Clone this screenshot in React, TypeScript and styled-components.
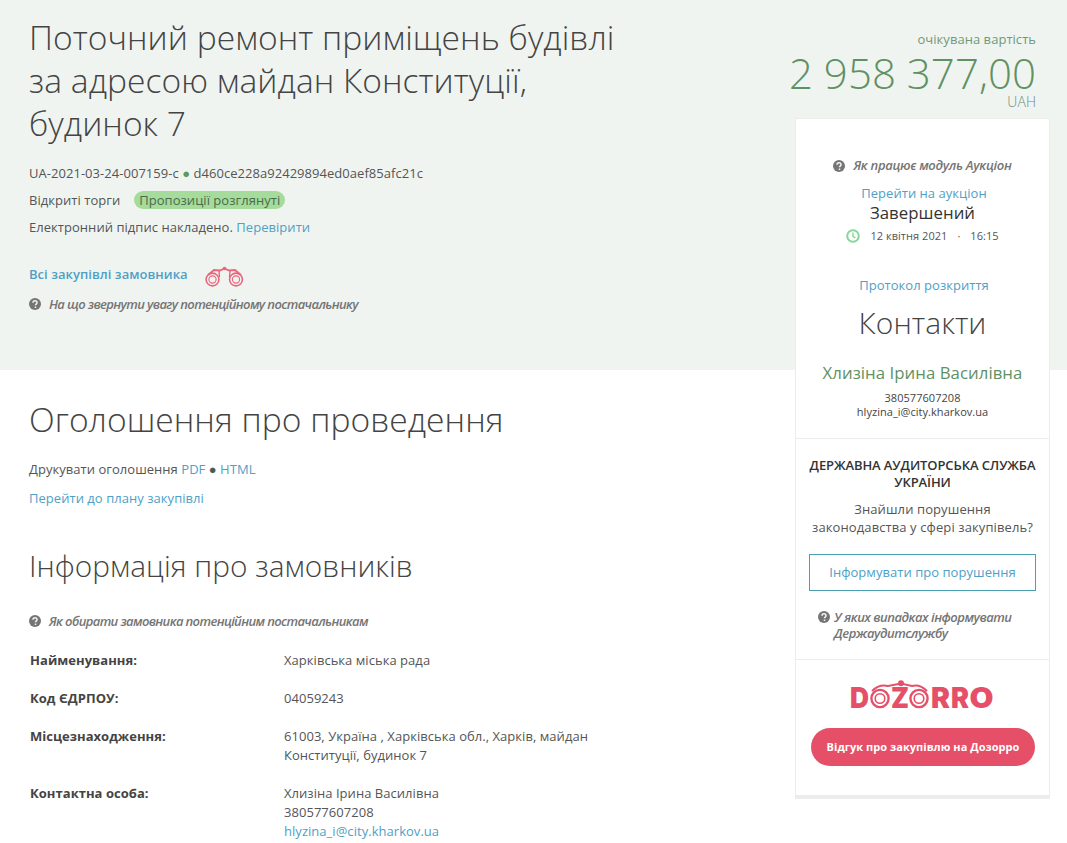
import React from "react";
import styled, { createGlobalStyle } from "styled-components";

const GlobalStyle = createGlobalStyle`
  html, body {
    margin: 0;
    padding: 0;
    height: 843px;
    overflow: hidden;
    background: #fff;
  }
  body {
    font-family: "Open Sans", "Liberation Sans", sans-serif;
    font-size: 13px;
    letter-spacing: 0.04px;
    color: #444;
  }
  * { box-sizing: border-box; }
`;

const Page = styled.div`
  display: grid;
  grid-template-columns: 795px 255px;
  height: 843px;
  background: linear-gradient(#f0f4f1 370px, #fff 370px);
`;

const Main = styled.main`
  padding: 16px 0 0 29px;
`;

const Hero = styled.section`
  height: 354px;
`;

const Title = styled.h1`
  margin: 0 0 19px;
  width: 600px;
  font-size: 33.6px;
  line-height: 43px;
  font-weight: 300;
  color: #444;
`;

const Line = styled.div<{ $gap?: number }>`
  line-height: 18px;
  font-size: 13px;
  color: #555;
  margin-bottom: ${(p) => p.$gap ?? 9}px;
  display: flex;
  align-items: center;
  white-space: pre;
`;

const Dot = styled.span`
  color: #5a9a62;
`;

const Link = styled.a`
  color: #4f9fc6;
  text-decoration: none;
`;

const Badge = styled.span`
  margin-left: 14px;
  padding: 0 5px;
  height: 18px;
  border-radius: 9px;
  background: #a5dc9b;
  color: #4b6a4c;
  line-height: 18px;
`;

const BuyerLink = styled(Link)`
  font-weight: 600;
  margin-right: 17px;
`;

const BuyerIcon = styled.span`
  display: flex;
  margin-top: 5px;
`;

const Hint = styled.div`
  display: flex;
  align-items: flex-start;
  gap: 8px;
  font-size: 13px;
  line-height: 16px;
  font-style: italic;
  font-weight: 600;
  color: #757575;
  letter-spacing: -0.62px;
`;

const BuyerRow = styled(Line)`
  margin: 26px 0 10px;
  height: 24px;
`;

const SectionTitle = styled.h2<{ $bottom: number }>`
  margin: 0 0 ${(p) => p.$bottom}px;
  font-size: 33.6px;
  line-height: 44px;
  font-weight: 300;
  color: #444;
`;

const SubTitle = styled(SectionTitle)`
  font-size: 29.8px;
  line-height: 38px;
`;

const Notice = styled.section`
  padding-top: 27px;
`;

const Spaced = styled(Line)`
  margin: 0 0 11px;
`;

const InfoGrid = styled.dl`
  display: grid;
  grid-template-columns: 254px 320px;
  row-gap: 19px;
  margin: 22px 0 0 1px;
`;

const Term = styled.dt`
  font-weight: 700;
  color: #444;
  line-height: 19px;
`;

const Value = styled.dd`
  margin: 0;
  color: #555;
  line-height: 19px;
`;

const Aside = styled.aside`
  display: flex;
  flex-direction: column;
  height: 799px;
`;

const Price = styled.div`
  height: 119px;
  padding: 30px 14px 0 0;
  text-align: right;
`;

const PriceLabel = styled.div`
  font-size: 13px;
  line-height: 18px;
  color: #6f9a78;
`;

const PriceValue = styled.div`
  font-size: 42px;
  line-height: 50px;
  font-weight: 300;
  color: #5f9163;
  margin-left: -60px;
  white-space: nowrap;
`;

const Currency = styled.div`
  font-size: 14px;
  line-height: 14px;
  font-weight: 300;
  color: #6f8a78;
  margin-top: -3px;
`;

const Card = styled.div`
  flex: 1;
  background: #fff;
  border: 1px solid #ececec;
  border-bottom: 4px solid #ececec;
  text-align: center;
`;

const CardSection = styled.div<{ $height: number; $top: number }>`
  height: ${(p) => p.$height}px;
  padding-top: ${(p) => p.$top}px;
  border-bottom: 1px solid #ececec;
  &:last-child { border-bottom: 0; }
`;

const CenteredHint = styled(Hint)`
  justify-content: center;
  align-items: center;
  letter-spacing: -0.3px;
`;

const CardLink = styled(Link)<{ $top: number }>`
  display: block;
  line-height: 18px;
  padding-left: 3px;
  margin-top: ${(p) => p.$top}px;
`;

const Status = styled.div`
  font-size: 16.8px;
  line-height: 22px;
  color: #333;
`;

const DateRow = styled.div`
  display: flex;
  justify-content: center;
  align-items: center;
  font-size: 11px;
  line-height: 24px;
  color: #555;
  gap: 10px;
`;

const ContactsTitle = styled.div`
  font-size: 30px;
  line-height: 40px;
  font-weight: 300;
  color: #444;
  margin: 9px 0 18px;
`;

const ContactName = styled.div`
  font-size: 16.8px;
  line-height: 24px;
  color: #5f9163;
  margin-bottom: 6px;
`;

const Small = styled.div`
  font-size: 11px;
  line-height: 14px;
  color: #444;
`;

const AuditTitle = styled.div`
  font-size: 13px;
  line-height: 17px;
  font-weight: 600;
  color: #333;
  letter-spacing: -0.1px;
  margin-bottom: 9px;
`;

const AuditText = styled.div`
  font-size: 13px;
  line-height: 18px;
  color: #555;
  letter-spacing: 0.1px;
  margin-bottom: 18px;
`;

const OutlineButton = styled.a`
  display: block;
  margin: 0 13px;
  height: 37px;
  line-height: 35px;
  border: 1px solid #4a9fb0;
  color: #4f9fc6;
  font-size: 13px;
`;

const AuditHint = styled(Hint)`
  margin: 18px 0 0 22px;
  text-align: left;
  gap: 4px;
  letter-spacing: -0.48px;
`;

const ReviewButton = styled.a`
  display: block;
  margin: 0 14px 0 15px;
  height: 38px;
  line-height: 38px;
  border-radius: 19px;
  background: #e55068;
  color: #fff;
  font-size: 11px;
  font-weight: 700;
`;

const LogoWrap = styled.div`
  display: flex;
  justify-content: center;
  margin-bottom: 16px;
`;

const LogoLetters = styled.text`
  font-family: "Inter", "Liberation Sans", sans-serif;
  font-weight: 900;
  font-size: 28px;
  letter-spacing: 0;
  fill: #e55068;
`;

const HelpIcon = () => (
  <svg width="12" height="12" viewBox="0 0 24 24" style={{ flex: "none", marginTop: 2 }}>
    <circle cx="12" cy="12" r="12" fill="#757575" />
    <path
      d="M8 9.5a4 4 0 0 1 8 0c0 2.6-3 2.7-3 5M13 17v3"
      fill="none"
      stroke="#f0f4f1"
      strokeWidth="3"
    />
  </svg>
);

const ClockIcon = () => (
  <svg width="14" height="14" viewBox="0 0 14 14" fill="none" stroke="#86d69a" strokeWidth="2">
    <circle cx="7" cy="7" r="5.8" />
    <path d="M7 3.6V7.4L9.4 8.8" strokeWidth="1.4" />
  </svg>
);

const Binoculars = () => (
  <svg width="40" height="22" viewBox="0 0 40 22" fill="none" stroke="#e8667c">
    <path d="M3 9 9 4 15 4.5 19.5 2.5 24 4.5 30 4 36 9" strokeWidth="1.8" />
    <path d="M14 5 14.5 11M25 5 24.5 11" strokeWidth="1.4" />
    <circle cx="19.5" cy="2.5" r="1.8" fill="#e8667c" stroke="none" />
    <circle cx="7.5" cy="13.5" r="6.4" strokeWidth="1.6" />
    <circle cx="7.5" cy="13.5" r="3.6" strokeWidth="1.1" />
    <circle cx="31" cy="13.5" r="6.4" strokeWidth="1.6" />
    <circle cx="31" cy="13.5" r="3.6" strokeWidth="1.1" />
  </svg>
);

const DozorroLogo = () => (
  <svg width="146" height="32" viewBox="0 0 146 32" overflow="visible">
    <LogoLetters x="0" y="28" textLength="19" lengthAdjust="spacingAndGlyphs">D</LogoLetters>
    <LogoLetters x="41" y="28" textLength="18" lengthAdjust="spacingAndGlyphs">Z</LogoLetters>
    <LogoLetters x="81" y="28" textLength="19" lengthAdjust="spacingAndGlyphs">R</LogoLetters>
    <LogoLetters x="101" y="28" textLength="18" lengthAdjust="spacingAndGlyphs">R</LogoLetters>
    <LogoLetters x="119.5" y="28" textLength="24" lengthAdjust="spacingAndGlyphs">O</LogoLetters>
    <g fill="none" stroke="#e55068">
      <circle cx="30" cy="18.5" r="8.6" strokeWidth="2.4" />
      <circle cx="30" cy="18.5" r="4.8" strokeWidth="1.6" />
      <circle cx="69" cy="18.5" r="8.6" strokeWidth="2.4" />
      <circle cx="69" cy="18.5" r="4.8" strokeWidth="1.6" />
      <path d="M22 11 Q29 4 38 6 L51 3.5 L62 6 Q70 4 77 11" strokeWidth="2" />
    </g>
    <circle cx="51" cy="3.2" r="3" fill="#e55068" />
  </svg>
);

export default function App() {
  return (
    <Page>
      <GlobalStyle />
      <Main>
        <Hero>
          <Title>
            Поточний ремонт приміщень будівлі за адресою майдан Конституції, будинок 7
          </Title>
          <Line>
            UA-2021-03-24-007159-c <Dot>●</Dot> d460ce228a92429894ed0aef85afc21c
          </Line>
          <Line>
            Відкриті торги
            <Badge>Пропозиції розглянуті</Badge>
          </Line>
          <Line>
            Електронний підпис накладено. <Link>Перевірити</Link>
          </Line>
          <BuyerRow>
            <BuyerLink>Всі закупівлі замовника</BuyerLink>
            <BuyerIcon>
              <Binoculars />
            </BuyerIcon>
          </BuyerRow>
          <Hint>
            <HelpIcon />
            На що звернути увагу потенційному постачальнику
          </Hint>
        </Hero>
        <Notice>
          <SectionTitle $bottom={19}>Оголошення про проведення</SectionTitle>
          <Spaced>
            Друкувати оголошення <Link>PDF</Link> ● <Link>HTML</Link>
          </Spaced>
          <Line $gap={40}>
            <Link>Перейти до плану закупівлі</Link>
          </Line>
          <SubTitle $bottom={28}>Інформація про замовників</SubTitle>
          <Hint>
            <HelpIcon />
            Як обирати замовника потенційним постачальникам
          </Hint>
          <InfoGrid>
            <Term>Найменування:</Term>
            <Value>Харківська міська рада</Value>
            <Term>Код ЄДРПОУ:</Term>
            <Value>04059243</Value>
            <Term>Місцезнаходження:</Term>
            <Value>
              61003, Україна , Харківська обл., Харків, майдан Конституції, будинок 7
            </Value>
            <Term>Контактна особа:</Term>
            <Value>
              Хлизіна Ірина Василівна
              <br />
              380577607208
              <br />
              <Link>hlyzina_i@city.kharkov.ua</Link>
            </Value>
          </InfoGrid>
        </Notice>
      </Main>
      <Aside>
        <Price>
          <PriceLabel>очікувана вартість</PriceLabel>
          <PriceValue>2 958 377,00</PriceValue>
          <Currency>UAH</Currency>
        </Price>
        <Card>
          <CardSection $height={320} $top={38}>
            <CenteredHint>
              <HelpIcon />
              Як працює модуль Аукціон
            </CenteredHint>
            <CardLink $top={11}>Перейти на аукціон</CardLink>
            <Status>Завершений</Status>
            <DateRow>
              <ClockIcon />
              <span>12 квітня 2021</span>
              <span>·</span>
              <span>16:15</span>
            </DateRow>
            <CardLink $top={28}>Протокол розкриття</CardLink>
            <ContactsTitle>Контакти</ContactsTitle>
            <ContactName>Хлизіна Ірина Василівна</ContactName>
            <Small>380577607208</Small>
            <Small>hlyzina_i@city.kharkov.ua</Small>
          </CardSection>
          <CardSection $height={221} $top={18}>
            <AuditTitle>
              ДЕРЖАВНА АУДИТОРСЬКА СЛУЖБА
              <br />
              УКРАЇНИ
            </AuditTitle>
            <AuditText>
              Знайшли порушення
              <br />
              законодавства у сфері закупівель?
            </AuditText>
            <OutlineButton>Інформувати про порушення</OutlineButton>
            <AuditHint>
              <HelpIcon />
              <span>
                У яких випадках інформувати
                <br />
                Держаудитслужбу
              </span>
            </AuditHint>
          </CardSection>
          <CardSection $height={135} $top={20}>
            <LogoWrap>
              <DozorroLogo />
            </LogoWrap>
            <ReviewButton>Відгук про закупівлю на Дозорро</ReviewButton>
          </CardSection>
        </Card>
      </Aside>
    </Page>
  );
}
